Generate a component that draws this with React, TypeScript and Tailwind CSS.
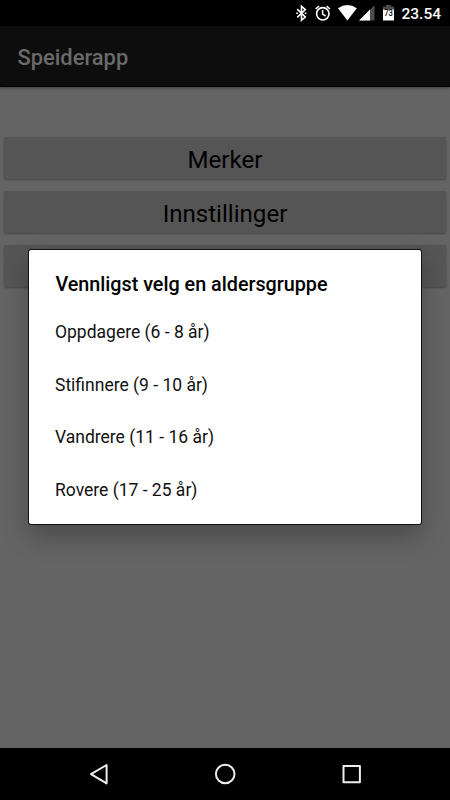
const menuItems = ['Merker', 'Innstillinger', ''];

const ageGroups = [
    'Oppdagere (6 - 8 år)',
    'Stifinnere (9 - 10 år)',
    'Vandrere (11 - 16 år)',
    'Rovere (17 - 25 år)',
];

function StatusBar() {
    return (
        <div className="h-[26px] shrink-0 bg-black flex items-center justify-end pr-[9px] text-white">
            <svg width="79" height="26" viewBox="0 0 79 26" fill="none">
                {/* Bluetooth */}
                <path d="M1.2 9.2L9.3 17L5.5 20.2V6.2L9.3 9.6L1.2 17.4" stroke="#fff" strokeWidth="1.6" />
                <path d="M0.3 13.3h1.7M8.7 13.3h1.7" stroke="#fff" strokeWidth="1.6" />
                {/* Alarm */}
                <circle cx="26.8" cy="13.8" r="6.2" stroke="#fff" strokeWidth="1.6" />
                <path d="M26.6 10v4.2l3 1.8M19.6 9l3.4-2.9M34 9l-3.4-2.9" stroke="#fff" strokeWidth="1.5" />
                {/* Wifi */}
                <path d="M42 8.2Q51.4 2 60.8 8.2L51.4 20.5Z" fill="#fff" />
                {/* Mobile signal */}
                <path d="M78.5 5.2V20.5H63Z" fill="#4d4d4d" />
                <path d="M74 9.6V20.5H63Z" fill="#fff" />
            </svg>
            {/* Battery */}
            <div className="relative ml-[8px] w-[11px] h-[26px]">
                <svg width="11" height="26" viewBox="0 0 11 26">
                    <path d="M3 5h5v1.5h3V10H0V6.5h3z" fill="#4d4d4d" />
                    <path d="M0 9.5h11v11H0z" fill="#fff" />
                </svg>
                <span className="absolute left-0 top-[9px] w-[11px] flex justify-center text-[9px] leading-[9px] font-medium text-black scale-x-85">73</span>
            </div>
            <span className="ml-[7px] text-[15.5px] leading-[26px] pt-[1px] font-medium">23.54</span>
        </div>
    );
}

function NavigationBar() {
    return (
        <div className="h-[52px] shrink-0 bg-black flex justify-center">
            <svg width="450" height="52" viewBox="0 0 450 52" fill="none" stroke="#eee" strokeWidth="2" strokeLinejoin="round">
                <path d="M106.6 17v18.4L91 26.2z" />
                <circle cx="225.2" cy="26" r="9.3" />
                <rect x="343.5" y="18" width="16.4" height="16.2" />
            </svg>
        </div>
    );
}

export default function App() {
    return (
        <div className="relative w-[450px] h-[800px] overflow-hidden flex flex-col bg-[#646464] font-[Roboto,sans-serif]">
            <StatusBar />

            <header className="relative h-[61px] shrink-0 bg-[#0d0d0d] border-b border-black flex items-center pl-[17.5px] pt-[5px] shadow-[0_1px_3px_rgba(0,0,0,0.4)]">
                <h1 className="text-[21.9px] font-medium text-[#6a6a6a]">Speiderapp</h1>
            </header>

            <main className="flex-1 flex flex-col gap-[12px] px-[4px] pt-[50px]">
                {menuItems.map((item, i) => (
                    <button key={i} className="h-[42px] shrink-0 w-full rounded-[2px] bg-[#555] text-[24.1px] text-black flex items-center justify-center pt-[4px] shadow-[0_1px_2px_rgba(0,0,0,0.3)]">
                        {item}
                    </button>
                ))}
            </main>

            <NavigationBar />

            {/* Age group dialog */}
            <div role="dialog" className="absolute left-[29px] top-[250px] w-[392px] h-[274px] rounded-[2px] bg-white pl-[26.4px] pt-[21px] text-black shadow-[0_0_0_1px_#111,0_12px_26px_rgba(0,0,0,0.27)]">
                <h2 className="text-[19.75px] leading-[28px] font-medium">Vennligst velg en aldersgruppe</h2>
                <ul className="pt-[7px]">
                    {ageGroups.map((group) => (
                        <li key={group} className="h-[52.5px] flex items-center text-[17.5px] -ml-[0.4px] text-[#111]">
                            {group}
                        </li>
                    ))}
                </ul>
            </div>
        </div>
    );
}
